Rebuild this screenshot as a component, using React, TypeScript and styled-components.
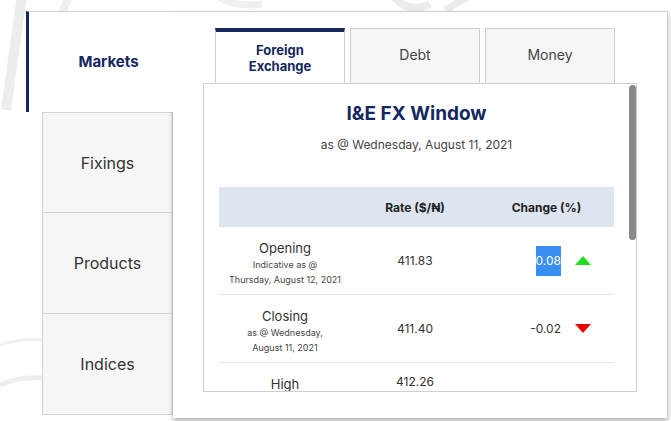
import styled, { createGlobalStyle } from "styled-components";

const navy = "#14285f";

const GlobalStyle = createGlobalStyle`
  html, body {
    margin: 0;
    padding: 0;
    background: #ffffff;
  }
  body {
    font-family: Inter, "Open Sans", "Liberation Sans", sans-serif;
    color: #333;
  }
  * {
    box-sizing: border-box;
  }
`;

type Row = {
  label: string;
  notes: string[];
  rate: string;
  change?: string;
  trend?: "up" | "down";
  selected?: boolean;
};

const rows: Row[] = [
  {
    label: "Opening",
    notes: ["Indicative as @", "Thursday, August 12, 2021"],
    rate: "411.83",
    change: "0.08",
    trend: "up",
    selected: true,
  },
  {
    label: "Closing",
    notes: ["as @ Wednesday,", "August 11, 2021"],
    rate: "411.40",
    change: "-0.02",
    trend: "down",
  },
  { label: "High", notes: [], rate: "412.26" },
];

export default function App() {
  return (
    <>
      <GlobalStyle />
      <Page>
        <Watermark width="671" height="421" viewBox="0 0 671 421">
          <path d="M22 -5 L6 110" stroke="#ededed" strokeWidth="10" fill="none" />
          <path d="M70 -5 L62 12" stroke="#efefef" strokeWidth="8" fill="none" />
          <path d="M215 -5 Q235 8 262 4" stroke="#efefef" strokeWidth="7" fill="none" />
          <path d="M395 -2 Q410 14 430 4" stroke="#ececec" strokeWidth="8" fill="none" />
          <path d="M445 10 L470 -4" stroke="#ececec" strokeWidth="7" fill="none" />
          <path d="M0 345 Q20 338 42 340" stroke="#f0f0f0" strokeWidth="3" fill="none" />
          <path d="M0 385 Q20 376 42 378" stroke="#eeeeee" strokeWidth="5" fill="none" />
        </Watermark>
        <Card>
          <LeftNav>
            <MarketsTab>Markets</MarketsTab>
            <SideTabs>
              <SideTab>Fixings</SideTab>
              <SideTab>Products</SideTab>
              <SideTab>Indices</SideTab>
            </SideTabs>
          </LeftNav>
          <Panel>
            <TopTabs>
              <TopTab $active>
                Foreign
                <br />
                Exchange
              </TopTab>
              <TopTab>Debt</TopTab>
              <TopTab>Money</TopTab>
            </TopTabs>
            <Window>
              <ScrollThumb />
              <Title>I&amp;E FX Window</Title>
              <Subtitle>as @ Wednesday, August 11, 2021</Subtitle>
              <Table>
                <HeadRow>
                  <HeadCell />
                  <HeadCell>Rate ($/₦)</HeadCell>
                  <HeadCell>Change (%)</HeadCell>
                </HeadRow>
                {rows.map((r) => (
                  <BodyRow key={r.label}>
                    <LabelCell>
                      <RowLabel>{r.label}</RowLabel>
                      {r.notes.map((n) => (
                        <RowNote key={n}>{n}</RowNote>
                      ))}
                    </LabelCell>
                    <RateCell>{r.rate}</RateCell>
                    <ChangeCell>
                      {r.change && (
                        <ChangeValue $selected={r.selected}>{r.change}</ChangeValue>
                      )}
                      {r.trend && <Arrow $dir={r.trend} />}
                    </ChangeCell>
                  </BodyRow>
                ))}
              </Table>
            </Window>
          </Panel>
        </Card>
      </Page>
    </>
  );
}

const Page = styled.div`
  position: relative;
  width: 671px;
  height: 421px;
  overflow: hidden;
  padding: 11px 3px 0 26px;
`;

const Watermark = styled.svg`
  position: absolute;
  left: 0;
  top: 0;
  z-index: 0;
`;

const Card = styled.div`
  position: relative;
  z-index: 1;
  display: flex;
  align-items: flex-start;
`;

const LeftNav = styled.div`
  width: 147px;
  display: flex;
  flex-direction: column;
`;

const MarketsTab = styled.div`
  position: relative;
  z-index: 2;
  height: 101px;
  width: 148px;
  background: #fff;
  border-top: 1px solid #cfcfcf;
  border-left: 3px solid ${navy};
  padding-left: 14px;
  padding-bottom: 2px;
  display: flex;
  align-items: center;
  justify-content: center;
  font-weight: 700;
  font-size: 15px;
  color: ${navy};
`;

const SideTabs = styled.div`
  margin-left: 16px;
  display: flex;
  flex-direction: column;
`;

const SideTab = styled.div`
  height: 101px;
  width: 131px;
  background: #f6f6f6;
  border: 1px solid #d4d4d4;
  border-top: none;
  display: flex;
  align-items: center;
  justify-content: center;
  font-size: 16px;
  color: #333;

  &:first-child {
    border-top: 1px solid #d4d4d4;
  }
`;

const Panel = styled.div`
  width: 495px;
  height: 407px;
  background: #fff;
  border-top: 1px solid #cfcfcf;
  border-right: 1px solid #cfcfcf;
  box-shadow: 0 3px 5px rgba(0, 0, 0, 0.3);
  padding: 16px 0 0 30px;
`;

const TopTabs = styled.div`
  display: flex;
  gap: 5px;
  margin-left: 12px;
`;

const TopTab = styled.div<{ $active?: boolean }>`
  width: 130px;
  height: 56px;
  background: ${({ $active }) => ($active ? "#fff" : "#f6f6f6")};
  border: 1px solid #cfcfcf;
  border-bottom: none;
  border-top: ${({ $active }) =>
    $active ? `4px solid ${navy}` : "1px solid #cfcfcf"};
  display: flex;
  align-items: center;
  justify-content: center;
  text-align: center;
  font-size: ${({ $active }) => ($active ? "13px" : "14px")};
  line-height: 16px;
  font-weight: ${({ $active }) => ($active ? 700 : 400)};
  color: ${({ $active }) => ($active ? navy : "#444")};
  padding-bottom: ${({ $active }) => ($active ? "0" : "4px")};
`;

const Window = styled.div`
  position: relative;
  margin-top: -1px;
  width: 434px;
  height: 309px;
  border: 1px solid #cfcfcf;
  background: #fff;
  overflow: hidden;
  padding: 0 22px 0 15px;
`;

const ScrollThumb = styled.div`
  position: absolute;
  right: 0;
  top: 1px;
  width: 7px;
  height: 155px;
  border-radius: 4px;
  background: #888;
`;

const Title = styled.div`
  margin-top: 18px;
  text-align: center;
  font-size: 19px;
  font-weight: 700;
  color: ${navy};
  line-height: 24px;
`;

const Subtitle = styled.div`
  margin-top: 11px;
  text-align: center;
  font-size: 12px;
  color: #444;
  line-height: 16px;
`;

const Table = styled.div`
  margin-top: 34px;
  width: 395px;
`;

const HeadRow = styled.div`
  display: grid;
  grid-template-columns: 132px 128px 135px;
  height: 40px;
  background: #dce5f0;
  align-items: center;
`;

const HeadCell = styled.div`
  text-align: center;
  font-size: 12px;
  font-weight: 700;
  color: #222;
`;

const BodyRow = styled.div`
  display: grid;
  grid-template-columns: 132px 128px 135px;
  border-bottom: 1px solid #e2e2e2;
  align-items: center;
`;

const LabelCell = styled.div`
  display: flex;
  flex-direction: column;
  align-items: center;
  text-align: center;
  padding: 12px 0 7px;
`;

const RowLabel = styled.div`
  font-size: 13px;
  line-height: 18px;
  color: #333;
`;

const RowNote = styled.div`
  font-size: 9px;
  line-height: 15px;
  color: #444;
  white-space: nowrap;
`;

const RateCell = styled.div`
  text-align: center;
  font-size: 12px;
  color: #333;
`;

const ChangeCell = styled.div`
  display: flex;
  align-items: center;
  justify-content: flex-end;
  gap: 14px;
  padding-right: 23px;
`;

const ChangeValue = styled.span<{ $selected?: boolean }>`
  display: inline-block;
  font-size: 12px;
  line-height: 30px;
  color: ${({ $selected }) => ($selected ? "#fff" : "#333")};
  background: ${({ $selected }) => ($selected ? "#3a8ff3" : "transparent")};
`;

const Arrow = styled.span<{ $dir: "up" | "down" }>`
  width: 0;
  height: 0;
  border-left: 8px solid transparent;
  border-right: 8px solid transparent;
  ${({ $dir }) =>
    $dir === "up"
      ? "border-bottom: 9px solid #22dd22;"
      : "border-top: 9px solid #e80000;"}
`;
